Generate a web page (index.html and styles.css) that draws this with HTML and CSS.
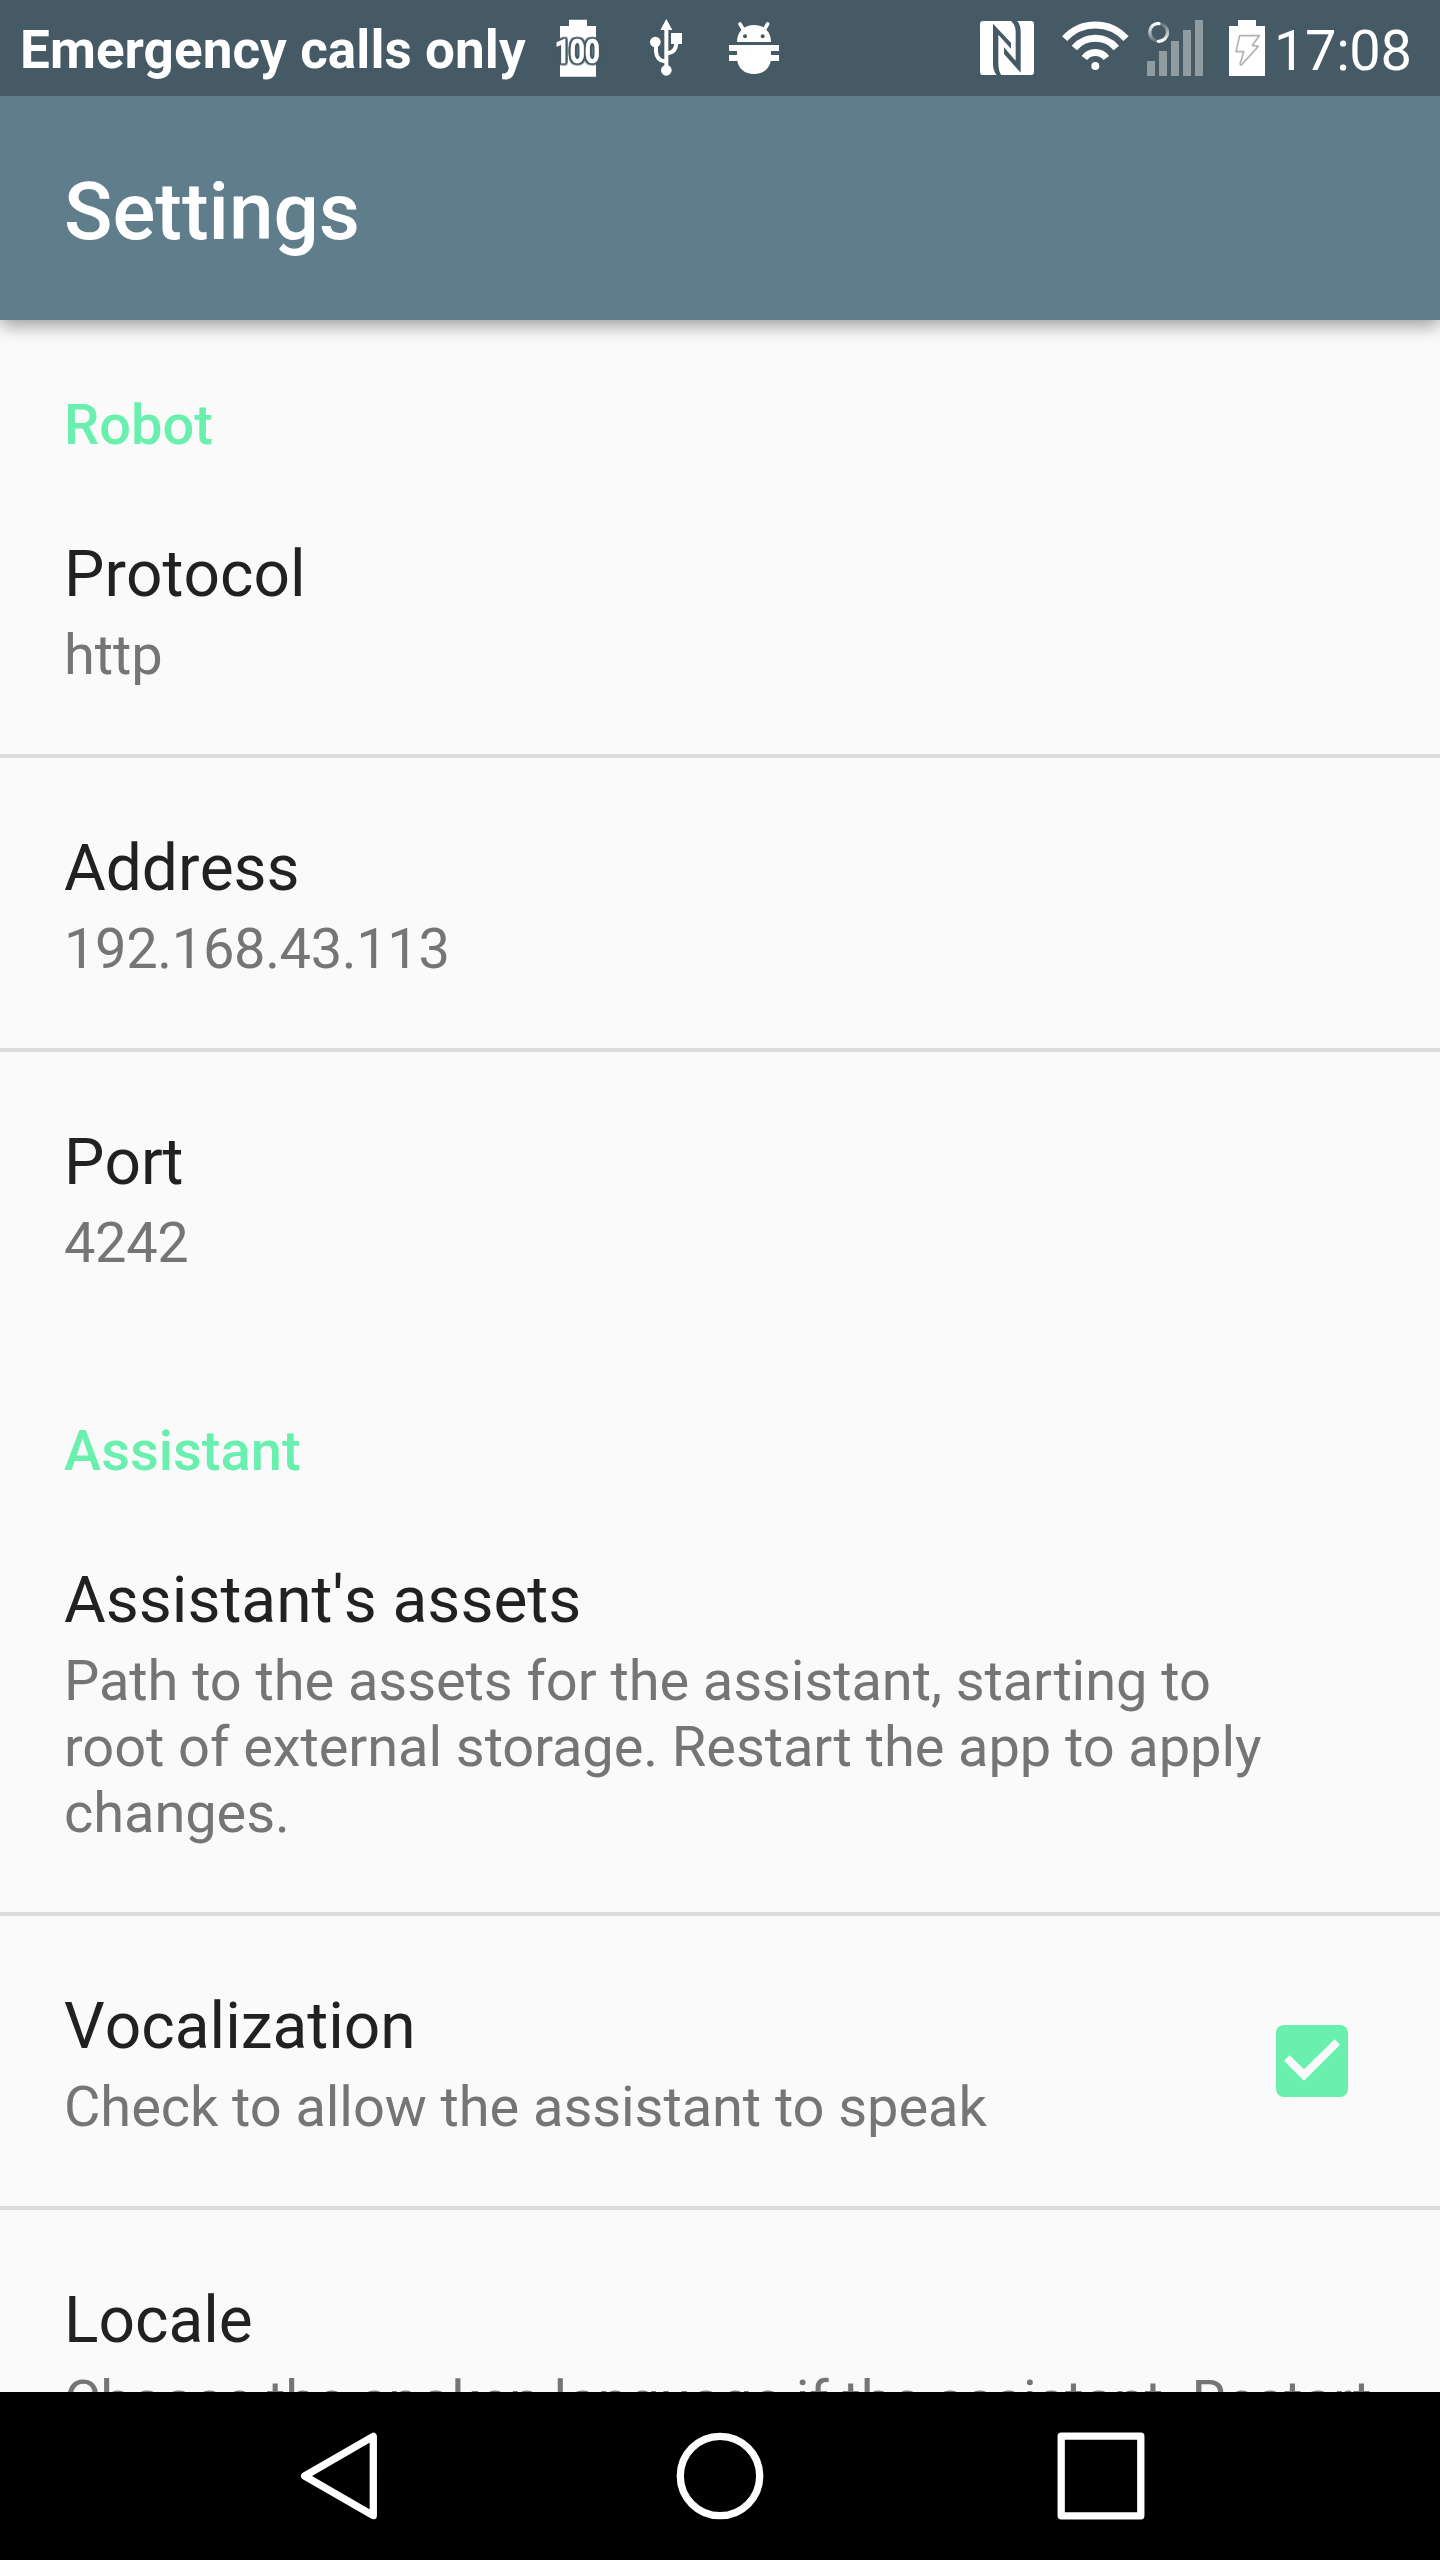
FILE: index.html
```html
<!DOCTYPE html>
<html lang="en">
<head>
<meta charset="utf-8">
<title>Settings</title>
<link rel="stylesheet" href="styles.css">
</head>
<body>
<div class="screen">
  <header class="status">
    <span class="carrier">Emergency calls only</span>
    <svg class="icon icon-level" viewBox="78 0 132 288">
      <path class="fill" d="M90 78H117V59H171V78H198V230H90Z"/>
      <text class="level" x="74" y="189" textLength="136" lengthAdjust="spacingAndGlyphs">100</text>
    </svg>
    <svg class="icon icon-usb" viewBox="360 0 96 288">
      <path class="fill" d="M409 57L427 90H415V200H403V90H391ZM423 99H456V132H423Z"/>
      <circle class="fill" cx="409" cy="211" r="16"/>
      <circle class="fill" cx="376" cy="126" r="16"/>
      <path class="line" d="M378 138V154Q380 182 405 184M439 130Q438 156 413 160" stroke-width="12"/>
    </svg>
    <svg class="icon icon-bug" viewBox="597 0 150 288">
      <path class="line" d="M630 72L642 92M713 72L701 92" stroke-width="11" stroke-linecap="round"/>
      <path class="fill" d="M621 126C621 94 643 75 672 75S723 94 723 126Z"/>
      <circle class="hole" cx="645" cy="109" r="6"/>
      <circle class="hole" cx="698" cy="109" r="6"/>
      <path class="fill" d="M597 135H747V153H723V165H747V183H722C718 206 700 222 672 222S626 206 622 183H597V165H621V153H597Z"/>
    </svg>
    <div class="system">
      <svg class="icon icon-nfc" viewBox="60 0 162 288">
        <rect class="fill" x="60" y="63" width="162" height="162" rx="10"/>
        <path class="hole" d="M99 71L153 128V146L115 104V188Q115 212 124 226H110Q99 212 99 192ZM152 62H171Q182 74 182 94V218L132 162V142L167 182V94Q167 74 152 62Z"/>
      </svg>
      <svg class="icon icon-wifi" viewBox="306 0 201 288">
        <circle class="fill" cx="406" cy="198" r="12"/>
        <path class="line" d="M314 116A123 123 0 0 1 498 116M343 144A83 83 0 0 1 469 144M373 174A41 41 0 0 1 439 174" stroke-width="21"/>
      </svg>
      <svg class="icon icon-signal" viewBox="51 0 168 288">
        <defs>
          <linearGradient id="fadeDown" x1="0" y1="0" x2="0" y2="1">
            <stop offset="0" stop-color="#fff"/><stop offset="1" stop-color="#fff" stop-opacity=".15"/>
          </linearGradient>
          <linearGradient id="fadeUp" x1="0" y1="1" x2="0" y2="0">
            <stop offset="0" stop-color="#fff"/><stop offset="1" stop-color="#fff" stop-opacity=".15"/>
          </linearGradient>
        </defs>
        <path class="bars" d="M51 183H75V228H51ZM87 153H111V228H87ZM123 123H147V228H123ZM159 90H183V228H159ZM195 60H219V228H195Z"/>
        <path d="M86 70A27 27 0 0 0 79 123" fill="none" stroke="url(#fadeDown)" stroke-width="10"/>
        <path d="M86 124A27 27 0 0 0 93 71" fill="none" stroke="url(#fadeUp)" stroke-width="10"/>
        <circle class="fill" cx="87" cy="71" r="5"/>
        <circle class="fill" cx="85" cy="124" r="5"/>
      </svg>
      <svg class="icon icon-battery" viewBox="297 0 108 288">
        <path class="fill" d="M297 78H324V60H378V78H405V228H297Z"/>
        <path class="bolt" d="M329 107H388L367 136L385 139L335 194Q329 197 331 189L341 155H318Z"/>
      </svg>
      <time class="clock">17:08</time>
    </div>
  </header>

  <div class="appbar"><h1 class="appbar-title">Settings</h1></div>

  <main class="list">
    <section class="group">
      <h2 class="category">Robot</h2>
      <div class="item">
        <div class="title">Protocol</div>
        <div class="summary">http</div>
      </div>
      <div class="item">
        <div class="title">Address</div>
        <div class="summary numeric">192.168.43.113</div>
      </div>
      <div class="item">
        <div class="title">Port</div>
        <div class="summary numeric">4242</div>
      </div>
    </section>
    <section class="group">
      <h2 class="category">Assistant</h2>
      <div class="item item-narrow">
        <div class="title">Assistant's assets</div>
        <div class="summary">Path to the assets for the assistant, starting to root of external storage. Restart the app to apply changes.</div>
      </div>
      <div class="item item-check">
        <div class="text">
          <div class="title">Vocalization</div>
          <div class="summary">Check to allow the assistant to speak</div>
        </div>
        <svg class="checkbox" viewBox="0 0 72 72">
          <rect class="box" width="72" height="72" rx="8"/>
          <path class="tick" d="M8 35.7L13.7 30.3L28 44.3L58.7 14.3L64 19.7L28 55.7Z"/>
        </svg>
      </div>
      <div class="item">
        <div class="title">Locale</div>
        <div class="summary">Choose the spoken language if the assistant. Restart</div>
      </div>
    </section>
  </main>

  <nav class="navbar">
    <svg class="nav-icon" viewBox="0 0 88 88"><path d="M78.300 4.300V83.700L9.600 44Z"/></svg>
    <svg class="nav-icon" viewBox="0 0 88 88"><circle cx="44" cy="44" r="39.700"/></svg>
    <svg class="nav-icon" viewBox="0 0 88 88"><rect x="4.200" y="4.200" width="79.600" height="79.600"/></svg>
  </nav>
</div>
</body>
</html>
```
FILE: styles.css
```css
* { box-sizing: border-box; }

body {
  margin: 0;
  background: #fafafa;
  font-family: Roboto, "Liberation Sans", sans-serif;
}

.screen {
  width: 1440px;
  height: 2560px;
  display: flex;
  flex-direction: column;
  overflow: hidden;
}

/* Status bar */
.status {
  flex: none;
  height: 96px;
  display: flex;
  background: #455a64;
  color: #fff;
  z-index: 2;
}

.carrier {
  width: 556px;
  padding: 19px 0 0 20px;
  font-size: 53px;
  font-weight: 700;
  line-height: 62px;
  letter-spacing: .08px;
  white-space: nowrap;
}

.icon { flex: none; height: 96px; display: block; overflow: visible; }
.fill { fill: #fff; }
.hole { fill: #455a64; }
.line { fill: none; stroke: #fff; }
.icon-level { width: 44px; }
.icon-usb { width: 32px; margin-left: 50px; }
.icon-bug { width: 50px; margin-left: 47px; }

.level {
  font-size: 97px;
  font-weight: 700;
  fill: #fff;
  stroke: #fff;
  stroke-width: 2px;
  filter: drop-shadow(5px 0 0 #455a64) drop-shadow(-5px 0 0 #455a64)
    drop-shadow(0 5px 0 #455a64) drop-shadow(0 -5px 0 #455a64);
}

.system {
  display: flex;
  margin-left: auto;
  padding-right: 29px;
}
.icon-nfc { width: 54px; }
.icon-wifi { width: 67px; margin-left: 28px; }
.icon-signal { width: 56px; margin-left: 18px; }
.icon-battery { width: 36px; margin-left: 26px; }
.bars { fill: #919ca1; }
.bolt { fill: none; stroke: #b2b2b2; stroke-width: 5px; stroke-linejoin: round; }

.clock {
  width: 146px;
  padding: 18px 0 0 9px;
  font-size: 56px;
  line-height: 66px;
  letter-spacing: -.4px;
  white-space: nowrap;
}

/* App bar */
.appbar {
  flex: none;
  height: 224px;
  display: flex;
  align-items: center;
  padding: 8px 64px 0;
  background: #607d8b;
  box-shadow: 0 6px 16px rgba(0, 0, 0, .36);
  z-index: 1;
}
.appbar-title {
  margin: 0;
  color: #fff;
  font-size: 80px;
  font-weight: 500;
  line-height: 94px;
}

/* Preferences */
.list { flex: 1; min-height: 0; overflow: hidden; }
.group + .group { margin-top: 4px; }

.category {
  margin: 0;
  padding: 72px 64px 6px;
  color: #69f0ae;
  font-size: 56px;
  font-weight: 500;
  line-height: 66px;
}

.item { padding: 73px 64px 66px; }
.item + .item { border-top: 4px solid #dcdcdc; }
.item-narrow { padding-right: 160px; }
.item-check {
  display: flex;
  justify-content: space-between;
  padding-right: 92px;
}

.title {
  color: #212121;
  font-size: 64px;
  font-kerning: none;
  line-height: 75px;
}
.summary {
  margin-top: 10px;
  color: #757575;
  font-size: 56px;
  line-height: 66px;
  letter-spacing: -.08px;
}
.numeric { letter-spacing: -.35px; }

.checkbox { width: 72px; height: 72px; margin-top: 36px; }
.box { fill: #69f0ae; }
.tick { fill: #fafafa; }

/* Navigation bar */
.navbar {
  flex: none;
  height: 168px;
  display: flex;
  justify-content: center;
  align-items: center;
  gap: 293px;
  background: #000;
}
.nav-icon {
  width: 88px;
  height: 88px;
  fill: none;
  stroke: #fff;
  stroke-width: 7.3px;
  stroke-linejoin: round;
}
```
